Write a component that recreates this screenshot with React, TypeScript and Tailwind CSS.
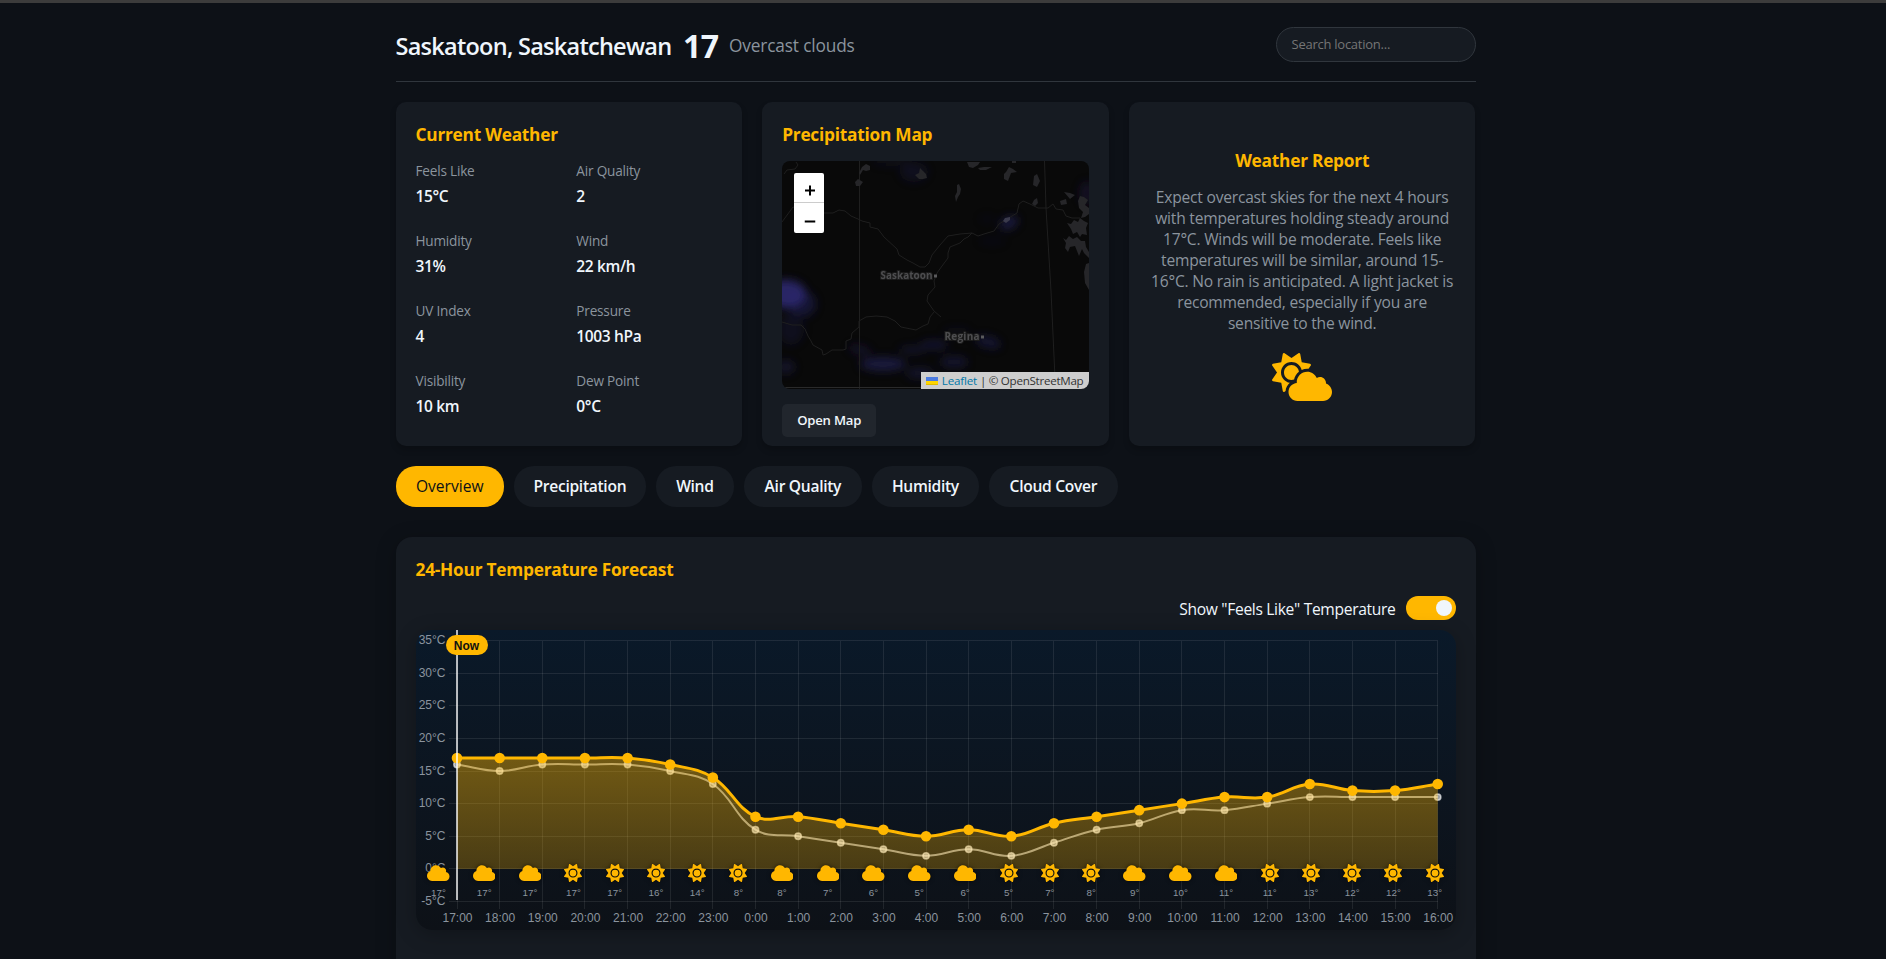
import type { ReactNode } from "react";
import { FaCloud, FaSun } from "react-icons/fa6";

const STATS = [
  ["Feels Like", "15°C"],
  ["Air Quality", "2"],
  ["Humidity", "31%"],
  ["Wind", "22 km/h"],
  ["UV Index", "4"],
  ["Pressure", "1003 hPa"],
  ["Visibility", "10 km"],
  ["Dew Point", "0°C"],
];

const TABS = [
  { label: "Overview", size: "w-[108.4px]" },
  { label: "Precipitation", size: "w-[132px]" },
  { label: "Wind", size: "w-[78px]" },
  { label: "Air Quality", size: "w-[118px]" },
  { label: "Humidity", size: "w-[107px]" },
  { label: "Cloud Cover", size: "w-[129px]" },
];

const TEMPS = [17, 17, 17, 17, 17, 16, 14, 8, 8, 7, 6, 5, 6, 5, 7, 8, 9, 10, 11, 11, 13, 12, 12, 13];
const FEELS = [16, 15, 16, 16, 16, 15, 13, 6, 5, 4, 3, 2, 3, 2, 4, 6, 7, 9, 9, 10, 11, 11, 11, 11];
const CLOUDY = "111000001111100011100000";
const HOURS = TEMPS.map((_, i) => `${(17 + i) % 24}:00`);
const TICKS = [35, 30, 25, 20, 15, 10, 5, 0, -5];

const px = (i: number) => 41 + i * 42.64;
const py = (t: number) => 10.5 + (35 - t) * 6.525;

function curve(values: number[], tension: number) {
  const pts = values.map((v, i) => ({ x: px(i), y: py(v) }));
  const ctrl = pts.map((p, i) => {
    const a = pts[Math.max(i - 1, 0)];
    const b = pts[Math.min(i + 1, pts.length - 1)];
    const d1 = Math.hypot(p.x - a.x, p.y - a.y);
    const d2 = Math.hypot(b.x - p.x, b.y - p.y);
    const f1 = (tension * d1) / (d1 + d2);
    const f2 = (tension * d2) / (d1 + d2);
    return {
      inX: p.x - f1 * (b.x - a.x),
      inY: p.y - f1 * (b.y - a.y),
      outX: p.x + f2 * (b.x - a.x),
      outY: p.y + f2 * (b.y - a.y),
    };
  });
  return pts
    .map((p, i) =>
      i === 0
        ? `M${p.x} ${p.y}`
        : `C${ctrl[i - 1].outX} ${ctrl[i - 1].outY} ${ctrl[i].inX} ${ctrl[i].inY} ${p.x} ${p.y}`,
    )
    .join(" ");
}

function CardTitle({ children }: { children: ReactNode }) {
  return (
    <h2 className="h-6 whitespace-nowrap text-[17.3px] leading-[26px] font-bold tracking-[-0.24px] text-[#ffb700]">
      {children}
    </h2>
  );
}

function CloudSun() {
  return (
    <svg className="mt-[19px] h-12 w-[60px]" viewBox="0 0 640 512" fill="#ffb700">
      <path d="M96 208c0-61.86 50.14-112 112-112c52.65 0 96.5 36.45 108.5 85.42C334.7 173.1 354.7 168 376 168c4.607 0 9.152 .3809 13.68 .8203l24.13-34.76c5.145-7.414 .8965-17.67-7.984-19.27L317.2 98.78L301.2 10.21C299.6 1.325 289.4-2.919 281.9 2.226L208 53.54L134.1 2.225C126.6-2.92 116.4 1.326 114.8 10.21L98.78 98.78L10.21 114.8C1.326 116.4-2.922 126.7 2.223 134.1l51.3 73.94L2.224 281.9c-5.145 7.414-.8975 17.67 7.983 19.27L98.78 317.2l16.01 88.58c1.604 8.881 11.86 13.13 19.27 7.982l10.71-7.432c2.725-35.15 19.85-66.51 45.83-88.1C137.1 309.8 96 263.9 96 208z" />
      <path d="M128 208c0 44.18 35.82 80 80 80c9.729 0 18.93-1.996 27.56-5.176c7.002-33.65 25.53-62.85 51.57-83.44C282.8 159.3 249.2 128 208 128C163.8 128 128 163.8 128 208z" />
      <path d="M575.2 325.6c.125-2 .8-3.744 .8-5.619c0-35.38-28.75-64-64-64c-12.62 0-24.25 3.749-34.13 9.999c-17.62-38.88-56.5-66-101.9-66c-61.75 0-112 50.12-112 112c0 3 .7522 5.743 .8772 8.618c-49.63 3.75-88.88 44.74-88.88 95.37C176 469 219 512 272 512h272c53 0 96-42.99 96-96C640 373.9 612.7 338.6 575.2 325.6z" />
    </svg>
  );
}

function PrecipitationMap() {
  return (
    <div className="relative h-[228px] overflow-hidden rounded-[8px] bg-[#090909]">
      <svg className="block" width="307" height="228" viewBox="0 0 307 228" fill="none">
        <defs>
          <filter id="rain" x="-20%" y="-20%" width="140%" height="140%">
            <feGaussianBlur stdDeviation="4.500" />
          </filter>
        </defs>
        <g filter="url(#rain)" fill="#2b2870">
          <ellipse cx="4" cy="133" rx="20" ry="14" opacity="0.9" />
          <ellipse cx="20" cy="143" rx="14" ry="13" opacity="0.4" />
          <ellipse cx="9" cy="168" rx="13" ry="16" opacity="0.2" />
          <ellipse cx="4" cy="206" rx="9" ry="7" opacity="0.3" />
          <ellipse cx="132" cy="11" rx="14" ry="10" opacity="0.2" />
          <ellipse cx="110" cy="1" rx="20" ry="4" opacity="0.15" />
          <ellipse cx="227" cy="62" rx="10" ry="6" opacity="0.5" transform="rotate(-25 227 62)" />
          <ellipse cx="210" cy="80" rx="14" ry="5" opacity="0.08" />
          <ellipse cx="205" cy="58" rx="9" ry="5" opacity="0.06" />
          <ellipse cx="78" cy="189" rx="12" ry="5" opacity="0.28" transform="rotate(15 78 189)" />
          <ellipse cx="101" cy="203" rx="23" ry="7" opacity="0.5" />
          <ellipse cx="138" cy="212" rx="14" ry="6" opacity="0.3" />
          <ellipse cx="130" cy="189" rx="13" ry="4" opacity="0.3" />
          <ellipse cx="152" cy="184" rx="14" ry="5" opacity="0.35" />
          <ellipse cx="175" cy="171" rx="14" ry="5" opacity="0.12" />
          <ellipse cx="172" cy="201" rx="14" ry="6" opacity="0.35" />
          <ellipse cx="206" cy="181" rx="13" ry="6" opacity="0.38" transform="rotate(15 206 181)" />
          <ellipse cx="305" cy="32" rx="8" ry="12" opacity="0.25" />
        </g>
        <g stroke="#1f1f1f" strokeWidth="1">
          <path d="M77.500 0V228M262.500 0L264 47L269 130L273.500 228" />
          <path d="M0 226.500H140" stroke="#2a2a2a" />
          <path d="M0 61L11 46L24 50L34 52H51L57 49L63 50L69 55L76 58L80 60L88 62V66L96 68L102 76L115 88L117 94L125 99L131 102L138 106H143L147 102L150 94L158 84L166 75L178 73L190 72L196 75L202 73L212 70L217 63L225 58L235 52L237 43L241 40L248 43L256 47H266L271 43L274 48L281 49L284 55L290 57H298" />
          <path d="M190 72L186 76L182 78L178 82L168 86L166 92V97L160 105L155 112L152 120L153 126L146 134L145 140L152 150L159 156M152 151L148 156L146 163L141 165L134 169L124 167L119 166L113 160L105 156L94 155L84 156L77 160L77 166L70 172L69 178L64 180V188L61 189H50L44 193L41 194L40 189L31 184L29 180L26 175L23 168L19 164H10L0 161" />
          <path d="M2 13L5 9L13 8L16 4L14 1" />
        </g>
        <g fill="#262629">
          <path d="M80 6L84 3L88 5L88 9L84 10L81 9L78 14L77 12ZM73 21L76 18L81 21L78 25L74 25ZM133 14L137 12L138 7L141 10L144 13L145 17L141 18L137 18ZM175 24L177 23L179 28L178 33L176 36L174 41L173 35L175 31ZM185 1H198L196 4L191 7L187 6ZM196 7L202 6H210L204 9H198ZM224 11L227 6L231 8L235 11L229 12L226 20L222 18L222 13ZM252 15L255 13L258 20L255 26L251 24ZM252 39L255 37L256 42L253 45L250 43ZM230 0H234V2H230ZM282 31L288 32L293 34L288 38ZM278 40L284 38L285 43L279 44Z" />
          <path d="M296 40L298 35L302 36L306 39L303 44L307 47V53L303 56L299 57L301 51L297 47ZM285 62L289 63L292 59L296 61L298 57L302 60L306 62L304 67L305 74L300 73L298 76L295 71L291 73L289 68ZM281 77L284 79L287 75L291 78L295 76L299 80L303 80L304 86L307 91V97L302 92L300 88L297 95L295 90L293 85L288 86L286 91L283 87L284 82ZM304 103L307 102V129L303 122L302 111Z" />
        </g>
        <g
          fill="#4e4e50"
          stroke="#1c1c1c"
          strokeWidth="2"
          paintOrder="stroke"
          className="font-['Open_Sans',sans-serif] text-[10px] font-bold"
        >
          <text x="98.500" y="118" textLength="52">
            Saskatoon
          </text>
          <text x="162.500" y="179" textLength="35">
            Regina
          </text>
        </g>
        <path d="M152 113.500h3v3h-3zM199 174.500h3v3h-3z" fill="#5a5a5c" />
        <path d="M221 60L223 57L228 56L228 59L224 62Z" fill="#3a3a4c" />
      </svg>
      <div className="absolute top-3 left-3 flex w-[30px] flex-col rounded-[2px] bg-white">
        <div className="flex h-[30px] items-center justify-center border-b border-[#ccc]">
          <svg width="11" height="11" viewBox="0 0 11 11" className="translate-x-[0.5px] translate-y-[3px]">
            <path d="M5.500 0.500v10M0.500 5.500h10" stroke="#000" strokeWidth="2" />
          </svg>
        </div>
        <div className="flex h-[30px] items-center justify-center">
          <svg width="11" height="11" viewBox="0 0 11 11" className="translate-x-[0.5px] translate-y-[3px]">
            <path d="M0 5.500h11" stroke="#000" strokeWidth="2" />
          </svg>
        </div>
      </div>
      <div className="absolute right-0 bottom-0 flex h-[17px] w-[168px] items-center bg-[#cecece] pl-[5px] text-[11.6px] leading-none whitespace-nowrap text-[#333]">
        <span className="mr-1 flex h-2 w-3 flex-col">
          <span className="h-1 bg-[#4c7be1]" />
          <span className="h-[3px] bg-[#ffd500]" />
          <span className="h-px bg-[#e0bc00]" />
        </span>
        <span className="tracking-[-0.2px] text-[#0078a8]">Leaflet</span>
        <span className="ml-[3px] tracking-[-0.27px]">| © OpenStreetMap</span>
      </div>
    </div>
  );
}

function TemperatureChart() {
  const main = curve(TEMPS, 0.4);
  const feels = curve(FEELS, 0.4);
  return (
    <div className="relative mt-2.5 h-[300px] rounded-[16px] bg-linear-to-b from-[#0a1929] to-[#0d1117] shadow-[0_4px_20px_rgba(0,0,0,0.25)]">
      <svg className="block" width="1040" height="300" viewBox="0 0 1040 300" fill="none">
        <defs>
          <linearGradient id="area" gradientUnits="userSpaceOnUse" x1="0" y1="10" x2="0" y2="271">
            <stop offset="0" stopColor="#ffb700" stopOpacity="0.6" />
            <stop offset="1" stopColor="#ffb700" stopOpacity="0.2" />
          </linearGradient>
        </defs>
        <g fill="#8b949e" className="font-['Liberation_Sans',sans-serif] text-[12px]">
          {TICKS.map((t) => (
            <text key={t} x="29.500" y={py(t) + 3.5} textAnchor="end">
              {t}°C
            </text>
          ))}
          {HOURS.map((h, i) => (
            <text key={i} x={px(i) + 0.5} y="292" textAnchor="middle">
              {h}
            </text>
          ))}
        </g>
        <g stroke="#fff" strokeOpacity="0.085" shapeRendering="crispEdges">
          {TICKS.map((t) => (
            <path key={t} d={`M33 ${py(t)}H1022`} />
          ))}
          {HOURS.map((_, i) => (
            <path key={i} d={`M${px(i)} 10.5V279`} />
          ))}
        </g>
        <path d={feels} stroke="#fff" strokeOpacity="0.6" strokeWidth="2" />
        {FEELS.map((t, i) => (
          <circle
            key={i}
            cx={px(i)}
            cy={py(t)}
            r="3.2"
            fill="#fff"
            fillOpacity="0.6"
            stroke="#fff"
            strokeOpacity="0.6"
            strokeWidth="1.500"
          />
        ))}
        <path d={`${main} L${px(23)} ${py(0)} L${px(0)} ${py(0)}Z`} fill="url(#area)" />
        <path d={main} stroke="#ffb700" strokeWidth="3" />
        {TEMPS.map((t, i) => (
          <circle key={i} cx={px(i)} cy={py(t)} r="5.3" fill="#ffb700" />
        ))}
      </svg>
      <div className="absolute top-0 left-10 h-[270px] w-0.5 bg-white/70" />
      <div className="absolute top-[5px] left-[30px] flex h-5 w-[42px] items-center justify-center rounded-full bg-[#ffb700] pt-px font-['Liberation_Sans',sans-serif] text-[12px] font-bold text-[#111]">
        Now
      </div>
      <div className="absolute top-[234px] right-0 left-0 flex justify-around text-[#ffb700]">
        {TEMPS.map((t, i) => (
          <div key={i} className="flex flex-col items-center">
            {CLOUDY[i] === "1" ? (
              <FaCloud className="h-[18px] w-[22.5px] drop-shadow-[0_0_2px_rgba(0,0,0,0.6)]" />
            ) : (
              <FaSun className="h-[18px] w-[18px] drop-shadow-[0_0_2px_rgba(0,0,0,0.6)]" />
            )}
            <span className="mt-[5px] flex h-3 w-0 justify-center font-['Liberation_Sans',sans-serif] text-[9.8px] leading-3 text-[#8b949e]">
              {t}°
            </span>
          </div>
        ))}
      </div>
    </div>
  );
}

export default function App() {
  return (
    <div className="h-[959px] overflow-hidden bg-[#0d1117] pr-[15px] font-['Open_Sans','Noto_Sans',sans-serif] text-[#f0f6fc]">
      <div className="-mr-[15px] h-[3px] bg-[#3c3c3c]" />
      <div className="mx-auto w-[1080px]">
        <header className="flex h-[79px] items-center border-b border-[#30363d] pt-[5px]">
          <h1 className="w-[287.5px] pt-0.5 text-[23.5px] leading-8 font-semibold tracking-[-0.73px] whitespace-nowrap">
            Saskatoon, Saskatchewan
          </h1>
          <span className="w-[46px] pt-0.5 text-[32px] leading-8 font-bold tracking-[-0.5px]">17</span>
          <span className="pt-0.5 text-[17.3px] leading-8 tracking-[-0.16px] text-[#8b949e]">Overcast clouds</span>
          <div className="ml-auto flex h-[35px] w-[200px] items-center rounded-full border border-[#30363d] bg-[#161b22] px-[15px] pt-px text-[13px] tracking-[-0.25px] text-[#757575]">
            Search location...
          </div>
        </header>

        <section className="mt-5 grid h-[344px] grid-cols-3 grid-rows-[344px] gap-5">
          <div className="rounded-[10px] bg-[#161b22] px-5 pt-5 shadow-[0_4px_6px_rgba(0,0,0,0.2)]">
            <CardTitle>Current Weather</CardTitle>
            <div className="mt-[15px] grid grid-cols-2 gap-x-[15px]">
              {STATS.map(([label, value]) => (
                <div key={label} className="h-[70px]">
                  <div className="text-[13.6px] leading-5 tracking-[-0.2px] text-[#8b949e]">{label}</div>
                  <div className="mt-[5px] text-[15.5px] leading-5 font-semibold tracking-[-0.35px]">{value}</div>
                </div>
              ))}
            </div>
          </div>

          <div className="rounded-[10px] bg-[#161b22] px-5 pt-5 shadow-[0_4px_6px_rgba(0,0,0,0.2)]">
            <CardTitle>Precipitation Map</CardTitle>
            <div className="mt-[15px]">
              <PrecipitationMap />
            </div>
            <button className="mt-[15px] flex h-[33px] w-[94px] items-center justify-center rounded-[5px] bg-[#21262d] pt-px text-[13.1px] font-semibold tracking-[-0.2px]">
              Open Map
            </button>
          </div>

          <div className="flex flex-col items-center rounded-[10px] bg-[#161b22] pt-[46px] shadow-[0_4px_6px_rgba(0,0,0,0.2)]">
            <CardTitle>Weather Report</CardTitle>
            <p className="mt-[15px] text-center text-[15.6px] leading-[21px] tracking-[-0.22px] whitespace-nowrap text-[#8b949e]">
              Expect overcast skies for the next 4 hours
              <br />
              with temperatures holding steady around
              <br />
              17°C. Winds will be moderate. Feels like
              <br />
              temperatures will be similar, around 15-
              <br />
              16°C. No rain is anticipated. A light jacket is
              <br />
              recommended, especially if you are
              <br />
              sensitive to the wind.
            </p>
            <CloudSun />
          </div>
        </section>

        <nav className="mt-5 flex gap-2.5">
          {TABS.map(({ label, size }, i) => (
            <button
              key={label}
              className={`${size} h-[41px] rounded-[20px] pt-px text-[15.6px] whitespace-nowrap ${
                i === 0
                  ? "bg-[#ffb700] font-medium tracking-[0px] text-[#0d1117]"
                  : "bg-[#161b22] font-semibold tracking-[-0.3px]"
              }`}
            >
              {label}
            </button>
          ))}
        </nav>

        <section className="mt-[30px] h-[460px] rounded-[16px] bg-[#161b22] p-5 shadow-[0_4px_20px_rgba(0,0,0,0.25)]">
          <CardTitle>24-Hour Temperature Forecast</CardTitle>
          <div className="mt-[15px] flex h-6 items-center justify-end gap-2.5">
            <span className="pt-0.5 text-[15.6px] leading-6 tracking-[-0.32px]">Show "Feels Like" Temperature</span>
            <span className="flex h-6 w-[50px] items-center justify-end rounded-full bg-[#ffb700] pr-1">
              <span className="h-4 w-4 rounded-full bg-[#f0f6fc]" />
            </span>
          </div>
          <TemperatureChart />
        </section>
      </div>
    </div>
  );
}
